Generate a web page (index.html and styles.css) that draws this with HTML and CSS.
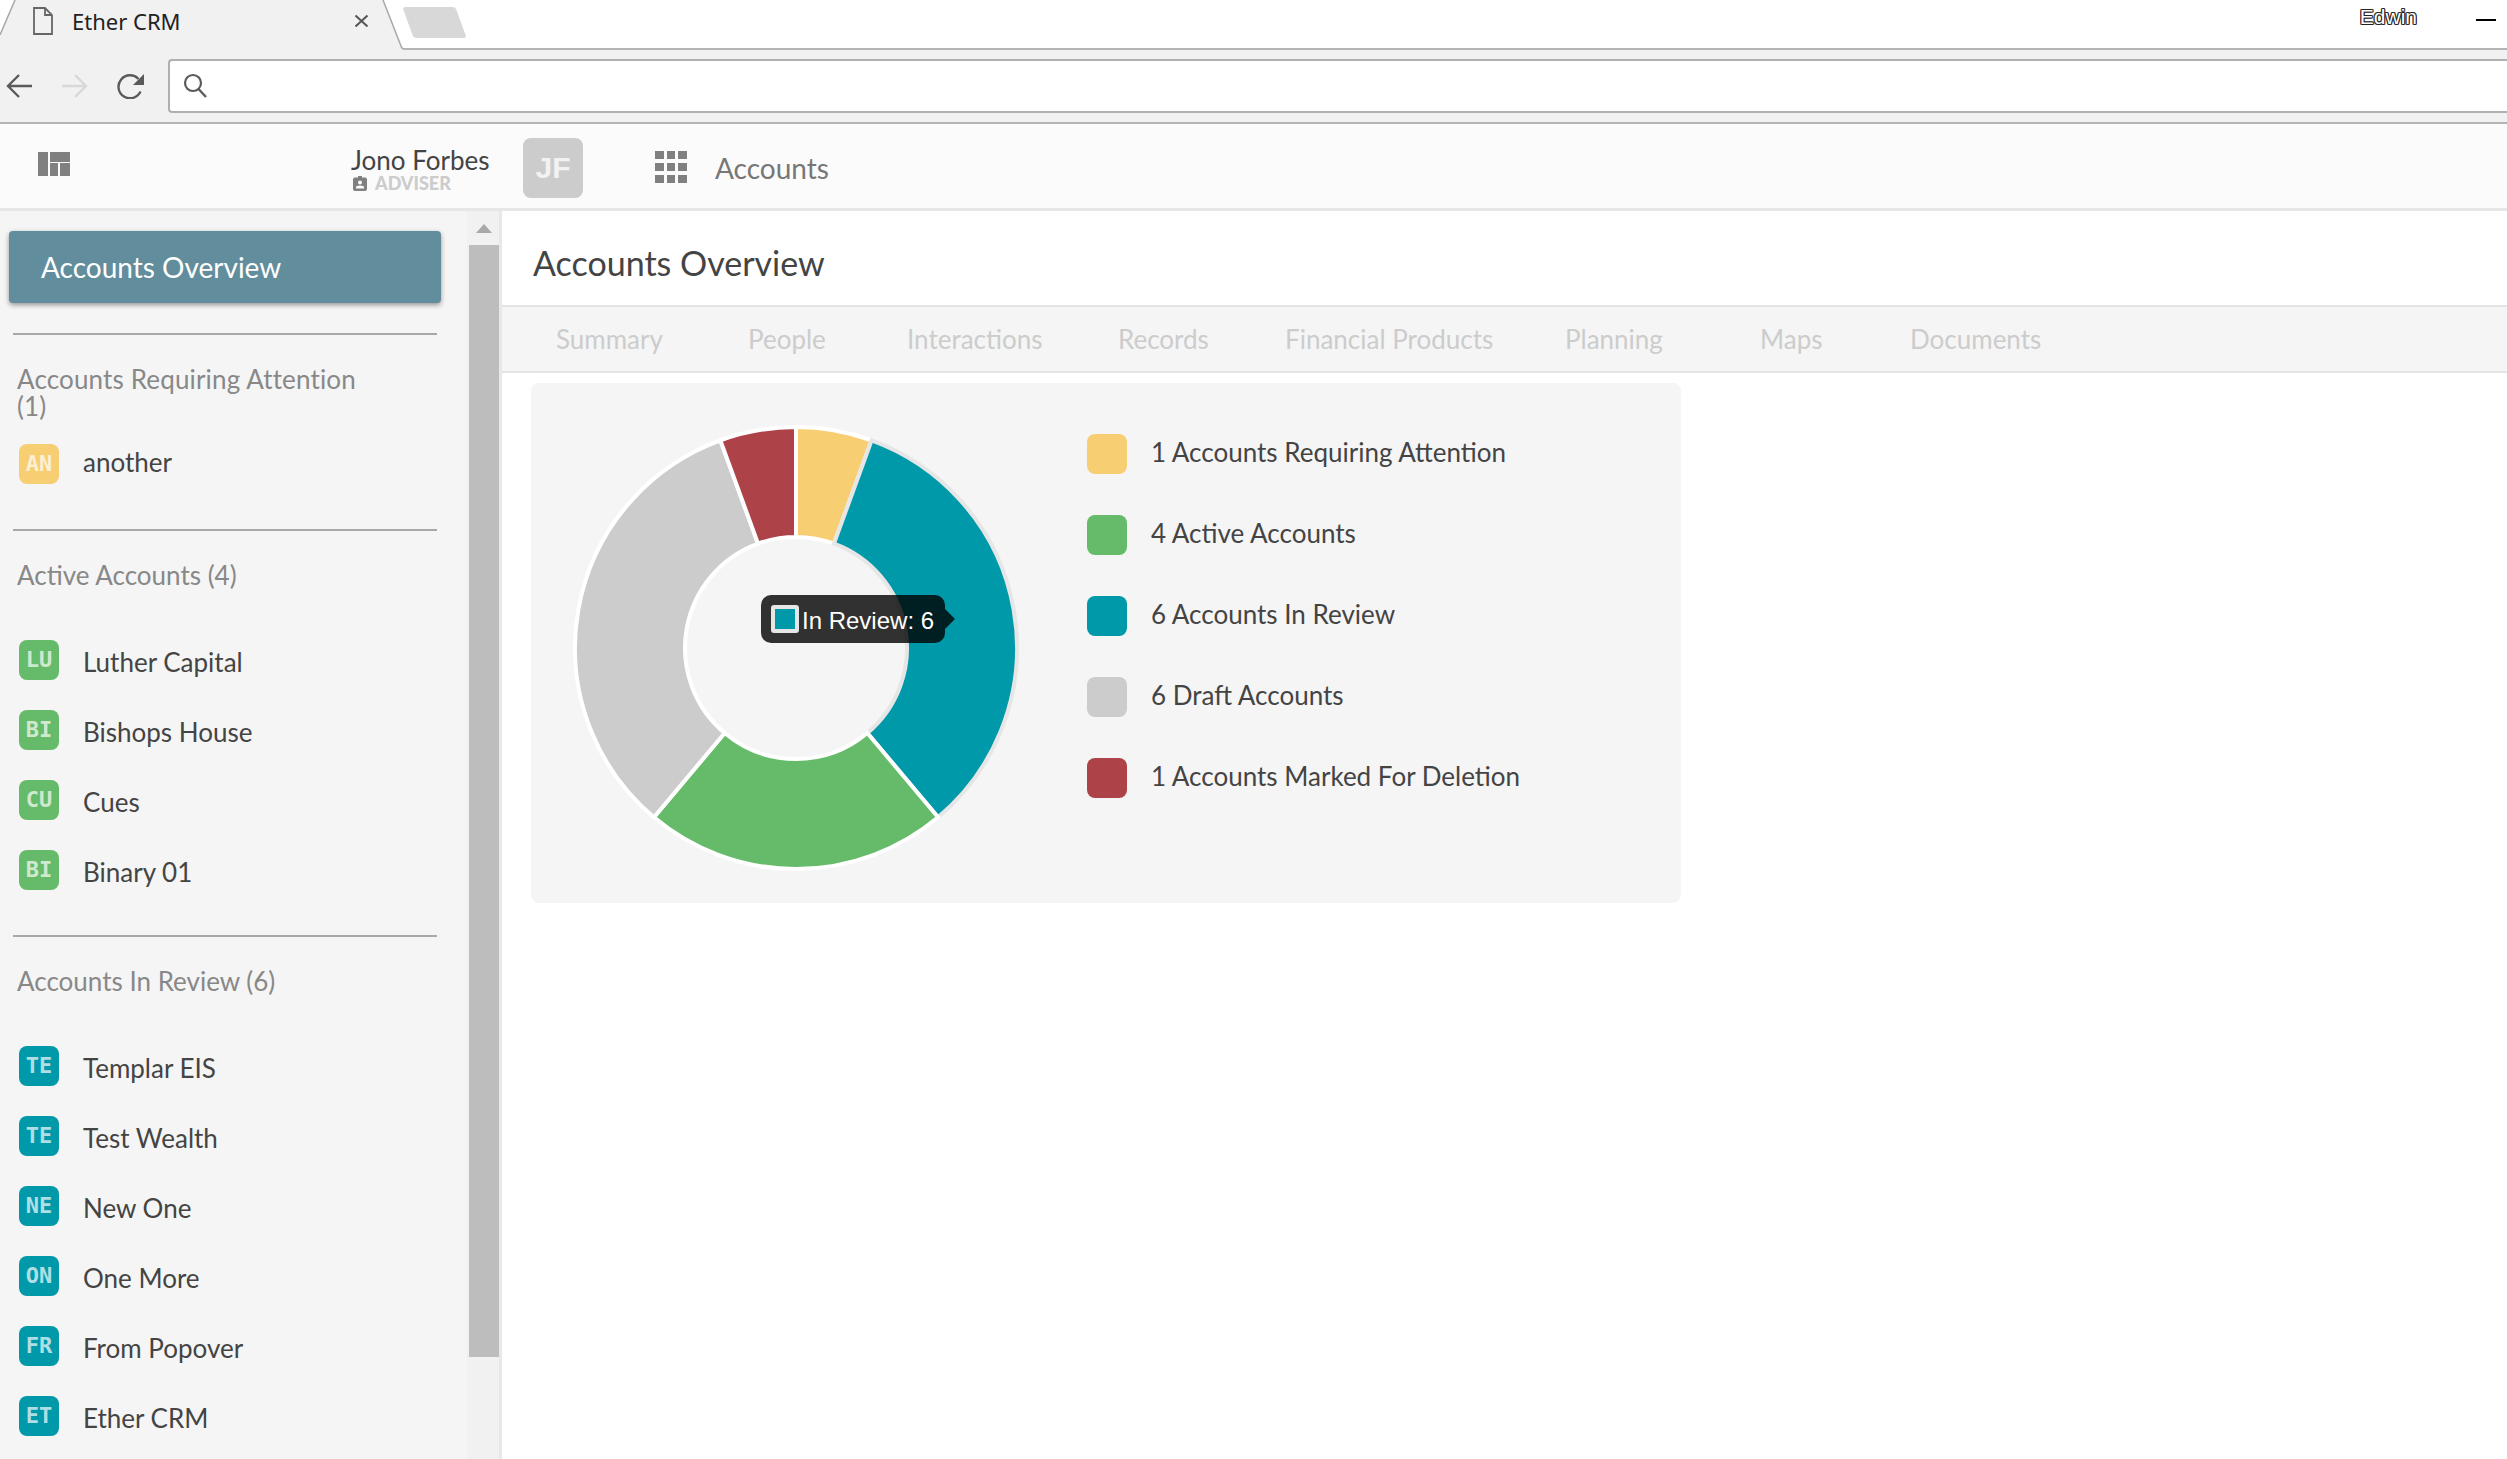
FILE: index.html
```html
<!DOCTYPE html>
<html lang="en">
<head>
    <meta charset="UTF-8">
    <title>Ether CRM</title>
    <link rel="stylesheet" href="styles.css">
</head>
<body>
    <div class="tabstrip">
        <div class="browser-tab">
            <svg class="tab-shape" width="404" height="50" viewBox="0 0 404 50"><path d="M0 35L15 0H383L401 46Q402 49 404 49V50H0Z" fill="#f1f1f1"/><path d="M0 35L15 0M383 0L401 46Q402 49 404 49" fill="none" stroke="#a8a8a8" stroke-width="1.500"/></svg>
            <svg class="file-icon" width="20" height="28" viewBox="0 0 20 28"><path d="M1 1H12L19 8V27H1Z M12 1V8H19" fill="none" stroke="#666" stroke-width="1.800"/></svg>
            <span class="tab-title">Ether CRM</span>
            <svg class="tab-close" width="15" height="14" viewBox="0 0 15 14"><path d="M1.500 1.500L13.500 12.500M13.500 1.500L1.500 12.500" stroke="#555" stroke-width="2"/></svg>
        </div>
        <div class="new-tab"></div>
        <div class="window-user">Edwin</div>
        <div class="window-min"></div>
    </div>
    <div class="toolbar">
        <svg width="26" height="26" viewBox="0 0 26 26"><path d="M26 13H3M13 2L2 13L13 24" fill="none" stroke="#5a5a5a" stroke-width="2.400"/></svg>
        <svg class="nav-forward" width="26" height="26" viewBox="0 0 26 26"><path d="M0 13H23M13 2L24 13L13 24" fill="none" stroke="#d8d8d8" stroke-width="2.400"/></svg>
        <svg class="nav-reload" width="28" height="26" viewBox="0 0 28 26"><path d="M23.500 18.500A11.500 11.500 0 1 1 21.500 6" fill="none" stroke="#5a5a5a" stroke-width="2.400"/><path d="M27 1V12H16Z" fill="#5a5a5a"/></svg>
        <div class="urlbar">
            <svg width="24" height="25" viewBox="0 0 24 25"><circle cx="10" cy="10" r="8" fill="none" stroke="#5a5a5a" stroke-width="2.200"/><path d="M15.500 16L23 24" stroke="#5a5a5a" stroke-width="2.400"/></svg>
        </div>
    </div>
    <header class="appbar">
        <svg class="layout-icon" width="32" height="24" viewBox="0 0 32 24"><path d="M0 0H10V24H0ZM12 0H32V10H12ZM12 11H20V24H12ZM22 11H32V24H22Z" fill="#808080"/></svg>
        <div class="user">
            <div class="user-name">Jono Forbes</div>
            <div class="user-role">
                <svg width="14" height="15" viewBox="0 0 14 15"><path fill-rule="evenodd" d="M2 1.500H5V0H9V1.500H12Q14 1.500 14 3.500V13Q14 15 12 15H2Q0 15 0 13V3.500Q0 1.500 2 1.500ZM7 4.500A2 2 0 1 0 7 8.500A2 2 0 1 0 7 4.500ZM3 12.500H11V11Q11 9.500 7 9.500Q3 9.500 3 11Z" fill="#808080"/></svg>
                <span>ADVISER</span>
            </div>
        </div>
        <div class="avatar">JF</div>
        <div class="apps-icon">
            <i></i><i></i><i></i><i></i><i></i><i></i><i></i><i></i><i></i>
        </div>
        <div class="crumb">Accounts</div>
    </header>
    <div class="app">
        <aside class="sidebar">
            <nav class="side-nav">
                <a class="overview-btn">Accounts Overview</a>
                <section class="side-group">
                    <h3>Accounts Requiring Attention (1)</h3>
                    <ul>
                        <li><span class="badge yellow">AN</span>another</li>
                    </ul>
                </section>
                <section class="side-group">
                    <h3>Active Accounts (4)</h3>
                    <ul>
                        <li><span class="badge green">LU</span>Luther Capital</li>
                        <li><span class="badge green">BI</span>Bishops House</li>
                        <li><span class="badge green">CU</span>Cues</li>
                        <li><span class="badge green">BI</span>Binary 01</li>
                    </ul>
                </section>
                <section class="side-group">
                    <h3>Accounts In Review (6)</h3>
                    <ul>
                        <li><span class="badge teal">TE</span>Templar EIS</li>
                        <li><span class="badge teal">TE</span>Test Wealth</li>
                        <li><span class="badge teal">NE</span>New One</li>
                        <li><span class="badge teal">ON</span>One More</li>
                        <li><span class="badge teal">FR</span>From Popover</li>
                        <li><span class="badge teal">ET</span>Ether CRM</li>
                    </ul>
                </section>
            </nav>
            <div class="scrollbar">
                <div class="scroll-arrow"></div>
                <div class="scroll-thumb"></div>
            </div>
        </aside>
        <main class="content">
            <h1>Accounts Overview</h1>
            <div class="tabs">
                <a>Summary</a>
                <a>People</a>
                <a>Interactions</a>
                <a>Records</a>
                <a>Financial Products</a>
                <a>Planning</a>
                <a>Maps</a>
                <a>Documents</a>
            </div>
            <div class="card">
                <div class="chart">
                    <svg width="446" height="446" viewBox="0 0 446 446">
                        <g stroke="#fff" stroke-width="4">
                            <path fill="#f8ce72" d="M223 2A221 221 0 0 1 298.59 15.33L260.96 118.69A111 111 0 0 0 223 112Z"/>
                            <path fill="#0099aa" stroke="#e6e6e6" d="M298.59 15.33A221 221 0 0 1 365.06 392.29L294.35 308.03A111 111 0 0 0 260.96 118.69Z"/>
                            <path fill="#66bb6a" d="M365.06 392.29A221 221 0 0 1 80.94 392.29L151.65 308.03A111 111 0 0 0 294.35 308.03Z"/>
                            <path fill="#cccccc" d="M80.94 392.29A221 221 0 0 1 147.41 15.33L185.04 118.69A111 111 0 0 0 151.65 308.03Z"/>
                            <path fill="#ad4249" d="M147.41 15.33A221 221 0 0 1 223 2V112A111 111 0 0 0 185.04 118.69Z"/>
                        </g>
                    </svg>
                    <div class="chart-tip">
                        <span class="tip-swatch"></span>
                        <span class="tip-label">In Review: 6</span>
                    </div>
                </div>
                <ul class="legend">
                    <li><span class="swatch yellow"></span>1 Accounts Requiring Attention</li>
                    <li><span class="swatch green"></span>4 Active Accounts</li>
                    <li><span class="swatch teal"></span>6 Accounts In Review</li>
                    <li><span class="swatch grey"></span>6 Draft Accounts</li>
                    <li><span class="swatch red"></span>1 Accounts Marked For Deletion</li>
                </ul>
            </div>
        </main>
    </div>
</body>
</html>
```

FILE: styles.css
```css
* {
    box-sizing: border-box;
}
body {
    margin: 0;
    height: 100vh;
    overflow: hidden;
    display: flex;
    flex-direction: column;
    font-family: 'Lato', 'Noto Sans', sans-serif;
    font-size: 26px;
    color: #444444;
    background-color: #ffffff;
}
ul {
    list-style: none;
    margin: 0;
    padding: 0;
}

/* browser chrome */
.tabstrip {
    height: 50px;
    flex: none;
    display: flex;
    align-items: flex-start;
    border-bottom: 2px solid #b4b4b4;
    background-color: #ffffff;
}
.browser-tab {
    position: relative;
    width: 404px;
    height: 50px;
    flex: none;
    display: flex;
    align-items: center;
    padding: 0 35px 8px 33px;
}
.tab-shape {
    position: absolute;
    left: 0;
    top: 0;
}
.file-icon,
.tab-title,
.tab-close {
    position: relative;
}
.tab-title {
    flex: 1;
    margin-left: 19px;
    font-family: 'Noto Sans', sans-serif;
    font-size: 22px;
    color: #222222;
}
.new-tab {
    width: 53px;
    height: 31px;
    margin: 7px 0 0 4px;
    background-color: #d8d8d8;
    border-radius: 3px;
    transform: skewX(20deg);
}
.window-user {
    margin: 5px 0 0 auto;
    font-family: 'Liberation Sans', sans-serif;
    font-size: 21px;
    color: #ffffff;
    text-shadow: 1px 0 #222, -1px 0 #222, 0 1px #222, 0 -1px #222, 1px 1px #555, -1px -1px #555, 1px -1px #555, -1px 1px #555;
}
.window-min {
    width: 20px;
    height: 2px;
    margin: 19px 11px 0 59px;
    background-color: #000000;
}
.toolbar {
    height: 74px;
    flex: none;
    display: flex;
    align-items: center;
    padding-left: 6px;
    padding-bottom: 1px;
    background-color: #f1f1f1;
    border-bottom: 2px solid #b4b4b4;
}
.nav-forward {
    margin-left: 30px;
}
.nav-reload {
    margin-left: 29px;
}
.urlbar {
    flex: 1;
    height: 54px;
    margin-left: 23px;
    display: flex;
    align-items: center;
    padding-left: 13px;
    background-color: #ffffff;
    border: 2px solid #b0b0b0;
    border-right: 0;
    border-radius: 4px 0 0 4px;
}

/* app header */
.appbar {
    height: 87px;
    flex: none;
    display: flex;
    align-items: flex-start;
    background-color: #fbfbfb;
    border-bottom: 3px solid #e6e6e6;
}
.layout-icon {
    margin: 28px 0 0 38px;
}
.user {
    width: 138px;
    margin: 21px 0 0 281px;
}
.user-name {
    font-size: 26px;
    line-height: 30px;
    color: #444444;
    white-space: nowrap;
}
.user-role {
    display: flex;
    align-items: center;
    gap: 8px;
    margin: 0 0 0 2px;
    font-size: 18px;
    line-height: 16px;
    font-weight: 900;
    color: #cccccc;
}
.avatar {
    width: 60px;
    height: 60px;
    margin: 14px 0 0 34px;
    display: flex;
    align-items: center;
    justify-content: center;
    border-radius: 8px;
    background-color: #cccccc;
    color: #f2f2f2;
    font-family: 'Liberation Sans', sans-serif;
    font-size: 30px;
    font-weight: 700;
}
.apps-icon {
    width: 32px;
    height: 32px;
    margin: 27px 0 0 72px;
    display: grid;
    grid-template-columns: repeat(3, 1fr);
    gap: 4px 3px;
}
.apps-icon i {
    background-color: #808080;
}
.crumb {
    margin: 27px 0 0 28px;
    font-size: 28px;
    line-height: 34px;
    color: #777777;
}

/* sidebar */
.app {
    flex: 1;
    min-height: 0;
    display: flex;
}
.sidebar {
    width: 502px;
    flex: none;
    display: flex;
    background-color: #f5f5f5;
    border-right: 3px solid #e8e8e8;
}
.side-nav {
    flex: 1;
    min-width: 0;
    padding: 20px 30px 0 0;
}
.overview-btn {
    display: flex;
    align-items: center;
    height: 72px;
    margin: 0 -4px 0 9px;
    padding-left: 32px;
    border-radius: 4px;
    background-color: #628d9d;
    box-shadow: 0 2px 5px rgba(0, 0, 0, 0.4);
    color: #ffffff;
    font-size: 28px;
}
.side-group {
    margin-left: 13px;
    padding-bottom: 45px;
    border-top: 2px solid #a8a8a8;
}
.overview-btn + .side-group {
    margin-top: 30px;
}
.side-group h3 {
    width: 350px;
    height: 54px;
    margin: 31px 0 24px 0;
    padding-left: 4px;
    font-size: 26px;
    line-height: 27px;
    font-weight: 400;
    color: #888888;
}
.overview-btn + .side-group h3 {
    letter-spacing: 0.15px;
}
.side-group ul {
    display: flex;
    flex-direction: column;
    gap: 30px;
    padding-left: 6px;
}
.side-group li {
    display: flex;
    align-items: flex-start;
    gap: 24px;
    height: 40px;
    font-size: 26px;
    line-height: 45px;
}
.overview-btn + .side-group li {
    line-height: 37px;
}
.badge {
    width: 40px;
    height: 40px;
    flex: none;
    display: flex;
    align-items: center;
    justify-content: center;
    border-radius: 8px;
    font-family: 'DejaVu Sans Mono', monospace;
    font-size: 22px;
    line-height: 40px;
    font-weight: 700;
    color: rgba(255, 255, 255, 0.7);
}
.yellow {
    background-color: #f8ce72;
}
.green {
    background-color: #66bb6a;
}
.teal {
    background-color: #0099aa;
}
.grey {
    background-color: #cccccc;
}
.red {
    background-color: #ad4249;
}
.scrollbar {
    width: 32px;
    flex: none;
    padding: 13px 0 0 2px;
    background-color: #f1f1f1;
}
.scroll-arrow {
    width: 0;
    margin: 0 auto;
    border-left: 8px solid transparent;
    border-right: 8px solid transparent;
    border-bottom: 9px solid #a8a8a8;
}
.scroll-thumb {
    height: 1112px;
    margin-top: 12px;
    background-color: #bdbdbd;
}

/* main panel */
.content {
    flex: 1;
    min-width: 0;
}
.content h1 {
    height: 94px;
    margin: 0;
    padding: 32px 0 0 31px;
    font-size: 34px;
    line-height: 40px;
    font-weight: 400;
    color: #444444;
}
.tabs {
    height: 68px;
    display: grid;
    grid-template-columns: 192px 159px 211px 167px 280px 195px 150px auto;
    align-items: center;
    padding-left: 54px;
    background-color: #f5f5f5;
    border-top: 2px solid #e4e4e4;
    border-bottom: 2px solid #e4e4e4;
    font-size: 26px;
    color: #cccccc;
}
.card {
    width: 1150px;
    height: 520px;
    margin: 10px 0 0 29px;
    padding: 42px 0 0 42px;
    display: flex;
    align-items: flex-start;
    border-radius: 8px;
    background-color: #f5f5f5;
}
.chart {
    position: relative;
    width: 446px;
    height: 446px;
    flex: none;
}
.chart svg {
    display: block;
}
.chart-tip {
    position: absolute;
    left: 188px;
    top: 170px;
    width: 184px;
    height: 48px;
    display: flex;
    align-items: center;
    gap: 3px;
    padding-left: 10px;
    border-radius: 10px;
    background-color: rgba(0, 0, 0, 0.8);
    color: #ffffff;
    font-family: 'Liberation Sans', sans-serif;
    font-size: 24px;
}
.tip-label {
    padding-top: 3px;
}
.chart-tip::after {
    content: "";
    position: absolute;
    left: 100%;
    top: 14px;
    border-left: 10px solid rgba(0, 0, 0, 0.8);
    border-top: 10px solid transparent;
    border-bottom: 10px solid transparent;
}
.tip-swatch {
    width: 28px;
    height: 28px;
    flex: none;
    border: 4px solid #e6e6e6;
    border-radius: 3px;
    background-color: #0099aa;
}
.legend {
    margin: 9px 0 0 68px;
    display: flex;
    flex-direction: column;
    gap: 41px;
}
.legend li {
    display: flex;
    align-items: flex-start;
    gap: 24px;
    height: 40px;
    font-size: 26px;
    line-height: 37px;
}
.swatch {
    width: 40px;
    height: 40px;
    flex: none;
    border-radius: 8px;
}
```
